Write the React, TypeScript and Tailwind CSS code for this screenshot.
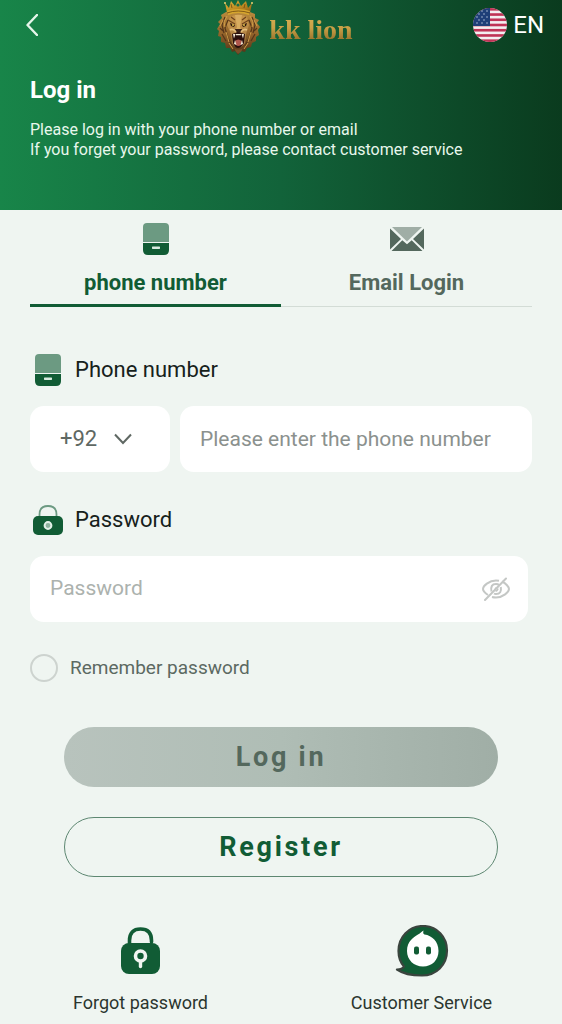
import { useState } from 'react';
import type { ReactNode } from 'react';
import clsx from 'clsx';

type LoginMode = 'phone' | 'email';

const COUNTRY_CODES = ['+92', '+91', '+880', '+1'];

const STRIPES = [0, 2, 4, 6, 8, 10, 12];

const STARS = [
  [4, 3], [9, 3], [14, 3],
  [6, 6], [11, 6],
  [4, 9], [9, 9], [14, 9],
  [6, 12], [11, 12],
  [4, 15], [9, 15], [14, 15],
];

function LionLogo() {
  return (
    <svg viewBox="0 0 44 56" className="h-14 w-11" aria-hidden="true">
      <defs>
        <linearGradient id="mane" x1="0" y1="0" x2="0" y2="1">
          <stop offset="0" stopColor="#b98a3c" />
          <stop offset="0.5" stopColor="#94642a" />
          <stop offset="1" stopColor="#4a2f16" />
        </linearGradient>
        <linearGradient id="crown" x1="0" y1="0" x2="1" y2="1">
          <stop offset="0" stopColor="#e5b93f" />
          <stop offset="0.5" stopColor="#c08d22" />
          <stop offset="1" stopColor="#8a5c14" />
        </linearGradient>
        <linearGradient id="face" x1="0" y1="0" x2="0" y2="1">
          <stop offset="0" stopColor="#c99648" />
          <stop offset="1" stopColor="#a57a46" />
        </linearGradient>
      </defs>
      <path
        d="M9 12 4 15 5 18 1 22 3 24 0 29 2 31 1 36 4 37 4 42 8 43 9 48 13 48 15 52 18 51 21 55 24 51 28 52 30 48 34 47 35 43 39 41 39 37 42 35 41 30 43 27 40 23 42 20 38 18 38 14 33 12Z"
        fill="url(#mane)"
      />
      <path
        d="M8 17 5 25 7 33M5 34 9 41M11 20 8 28 11 38 15 46M35 17 38 25 36 33M38 34 34 41M32 20 35 28 32 38 28 46M3 28 6 31M40 28 37 31M17 48 21 53 26 48"
        fill="none"
        stroke="#55351a"
        strokeWidth="1.2"
      />
      <path
        d="M6 20 3 26M10 16 7 22 8 27M9 32 12 42M37 20 40 26M33 16 36 22 35 27M34 32 31 42M12 43 16 49M31 43 27 49"
        fill="none"
        stroke="#cf9c48"
        strokeWidth="1"
      />
      <path d="M13 17Q21 12 30 17L32 25 29 34 28 43Q21 52 15 43L14 34 10 25Z" fill="url(#face)" />
      <path d="M18 15 20 27 18 31H25L23 27 25 15Z" fill="#d9ac60" />
      <path d="M11 20 18 24M32 20 25 24M14 17 18 20M29 17 25 20" stroke="#6e431d" strokeWidth="1.2" />
      <path d="M13 23 18 25 17 27 14 26ZM30 23 25 25 26 27 29 26Z" fill="#2c190c" />
      <circle cx="16" cy="25" r="0.9" fill="#f5cf54" />
      <circle cx="27" cy="25" r="0.9" fill="#f5cf54" />
      <path d="M18 29H25L24 32 21 34 19 32Z" fill="#3a2117" />
      <path d="M13 30Q16 28 19 32M30 30Q27 28 24 32" fill="none" stroke="#e3bd7c" strokeWidth="1.6" />
      <path d="M15 34Q21 31 28 34L27 43Q24 48 21 48 18 48 16 43Z" fill="#2a0f0c" />
      <path d="M18 41Q21 38 25 41L24 45Q21 47 19 45Z" fill="#b0564c" />
      <path
        d="M16 34 17 38.500 18.500 34ZM24.500 34 26 38.500 27 34ZM19 34H24V35.200H19ZM17 44 18 40 19.500 45ZM23.500 45 25 40 26 44Z"
        fill="#f4ead6"
      />
      <path d="M17 48Q21 51 26 48L24 52 21 54 19 52Z" fill="#79502a" />
      <path d="M8 3 12 8 14 1 18 6 21 0 24 6 29 1 31 8 35 3 33 13Q21 9 10 13Z" fill="url(#crown)" />
      <path d="M10 11Q21 7 33 11L32 15Q21 11 11 15Z" fill="#d6a52e" />
      <path d="M10 13Q21 9 33 13M14 4 15 8M28 4 27 8" fill="none" stroke="#6d4710" strokeWidth="0.8" />
      <circle cx="21" cy="5" r="1.6" fill="#1d6b46" />
      <circle cx="8" cy="3" r="1" fill="#f0d070" />
      <circle cx="35" cy="3" r="1" fill="#f0d070" />
    </svg>
  );
}

function FlagIcon() {
  return (
    <svg viewBox="0 0 34 34" className="size-[34px]" aria-hidden="true">
      <clipPath id="flag-clip">
        <circle cx="17" cy="17" r="17" />
      </clipPath>
      <g clipPath="url(#flag-clip)">
        <rect width="34" height="34" fill="#f3eef0" />
        {STRIPES.map((n) => (
          <rect key={n} y={(n * 34) / 13} width="34" height={34 / 13} fill="#bf3355" />
        ))}
        <rect width="17" height="18" fill="#1f3f78" />
        {STARS.map(([x, y]) => (
          <circle key={`${x}-${y}`} cx={x} cy={y} r="0.7" fill="#c9d5e8" />
        ))}
      </g>
    </svg>
  );
}

function PhoneIcon() {
  return (
    <svg viewBox="0 0 26 32" className="h-8 w-[26px]" aria-hidden="true">
      <path d="M4 0H22Q26 0 26 4V19H0V4Q0 0 4 0Z" fill="#6c9a82" />
      <path d="M0 20H26V27Q26 32 21 32H5Q0 32 0 27Z" fill="#115c35" />
      <rect x="9" y="23.5" width="8" height="2.4" rx="0.6" fill="#d9ebe0" />
    </svg>
  );
}

function MailIcon() {
  return (
    <svg viewBox="0 0 34 24" className="h-6 w-[34px]" aria-hidden="true">
      <path d="M2 0H32L17 14.5Z" fill="#a0aea6" />
      <path d="M0 1.5 11 12 0 22.5ZM34 1.5 23 12 34 22.5Z" fill="#54685d" />
      <path d="M12.3 13.2 17 17.3 21.7 13.2 32.5 24H1.5Z" fill="#54685d" />
    </svg>
  );
}

function LockIcon() {
  return (
    <svg viewBox="0 0 30 30" className="size-[30px]" aria-hidden="true">
      <path d="M6.5 13V9.5Q6.5 1 15 1T23.5 9.5V13" fill="none" stroke="#6c9a82" strokeWidth="1.8" />
      <rect y="11" width="30" height="19" rx="5" fill="#115c35" />
      <circle cx="15" cy="20.5" r="3.4" fill="#8db29e" stroke="#e3f0e8" strokeWidth="2" />
    </svg>
  );
}

function EyeOffIcon() {
  return (
    <svg viewBox="0 0 28 24" className="h-6 w-7" fill="none" stroke="#c4c7c5" strokeWidth="2" aria-hidden="true">
      <path d="M20 4.5C24 6.5 27 10 27 12 27 15 21 20.5 14 20.5Q12 20.5 10 20" />
      <path d="M6 18C3 16 1 13.5 1 12 1 9 7 3.5 14 3.5Q15.5 3.5 17 3.8" />
      <path d="M9.5 14.5Q8 7 14 7 16 7 17 8M18.8 10Q20 17 14 17 12.8 17 12 16.5" />
      <path d="M14 10.5 12.5 13.5M16 11.5Q15.5 14 13.5 14" strokeWidth="1.5" />
      <path d="M24 1.5 3 23" strokeLinecap="round" />
    </svg>
  );
}

function ForgotIcon() {
  return (
    <svg viewBox="0 0 40 48" className="h-12 w-10" aria-hidden="true">
      <path d="M8.5 18V13.5Q8.5 2 19.5 2T30.5 13.5V15" fill="none" stroke="#115c35" strokeWidth="3.6" strokeLinecap="round" />
      <rect y="16" width="39" height="31" rx="8" fill="#115c35" />
      <circle cx="19.5" cy="29" r="5" fill="none" stroke="#f0f5f1" strokeWidth="3.6" />
      <path d="M19.5 35V39.5" stroke="#f0f5f1" strokeWidth="3.4" strokeLinecap="round" />
    </svg>
  );
}

function ServiceIcon() {
  return (
    <svg viewBox="0 0 54 52" className="h-13 w-[54px]" aria-hidden="true">
      <path
        d="M28 1C42 1 52 12 52 25.5 52 40 41 50.5 27 50.5 17 50.5 7 48 2 44.5 5 44.5 8 43.5 9 41.5 5 37 3.5 32 3.5 26 3.5 12 14 1 28 1Z"
        fill="#115c35"
        stroke="#3a443e"
        strokeWidth="2.2"
        strokeLinejoin="round"
      />
      <path
        d="M12 26C12 16 19 12 23 9.5 25.5 8 27 6.5 28.5 5.5 28 7.5 28 9 29.5 9.5 37 10.5 43.5 16.5 43.5 26 43.5 35 37 41.5 28 41.5S12 35 12 26Z"
        fill="#fff"
      />
      <rect x="19" y="21.5" width="5" height="8" rx="2" fill="#115c35" />
      <rect x="31" y="21.5" width="5" height="8" rx="2" fill="#115c35" />
    </svg>
  );
}

interface TabProps {
  active: boolean;
  icon: ReactNode;
  label: string;
  onSelect: () => void;
}

function Tab({ active, icon, label, onSelect }: TabProps) {
  return (
    <button
      type="button"
      role="tab"
      aria-selected={active}
      onClick={onSelect}
      className={clsx(
        '-mb-px flex flex-1 flex-col items-center border-b-[3px] pb-[5px] text-[22px] leading-8 font-bold',
        active ? 'border-[#115c35] text-[#115c35]' : 'border-transparent text-[#54685d]',
      )}
    >
      <span className="mb-3 flex h-8 items-center">{icon}</span>
      {label}
    </button>
  );
}

export default function App() {
  const [mode, setMode] = useState<LoginMode>('phone');
  const [showPassword, setShowPassword] = useState(false);

  return (
    <div className="min-h-screen bg-[#eff5f1] font-[Roboto,sans-serif]">
      <header className="bg-linear-to-r from-[#188549] via-[#12633a] to-[#0a3b1e] pb-[50px] text-white">
        <div className="grid h-14 grid-cols-[1fr_auto_1fr] items-center pr-[18px] pl-[26px]">
          <button type="button" aria-label="Back" className="justify-self-start pb-1.5">
            <svg viewBox="0 0 12 22" className="h-[22px] w-3" fill="none" stroke="#e6f5ea" strokeWidth="2.4" aria-hidden="true">
              <path d="M11 1 1.5 11 11 21" strokeLinecap="round" strokeLinejoin="round" />
            </svg>
          </button>
          <div className="flex items-center gap-2">
            <LionLogo />
            <span className="bg-linear-to-b from-[#e0b95a] via-[#c9a046] to-[#7d5a1e] bg-clip-text pt-1 font-['Liberation_Serif',serif] text-[28px] leading-9 font-bold text-transparent">
              kk lion
            </span>
          </div>
          <button type="button" className="flex items-center gap-1.5 justify-self-end pb-1.5 text-2xl">
            <FlagIcon />
            EN
          </button>
        </div>
        <div className="px-[30px] pt-[18px]">
          <h1 className="text-2xl leading-8 font-bold">Log in</h1>
          <p className="pt-3.5 text-base leading-5 text-[#e8f7ec]">
            Please log in with your phone number or email
            <br />
            If you forget your password, please contact customer service
          </p>
        </div>
      </header>

      <main>
        <div role="tablist" className="mx-[30px] flex border-b border-[#d3dcd6] pt-[13px]">
          <Tab active={mode === 'phone'} icon={<PhoneIcon />} label="phone number" onSelect={() => setMode('phone')} />
          <Tab active={mode === 'email'} icon={<MailIcon />} label="Email Login" onSelect={() => setMode('email')} />
        </div>

        <form className="pt-[45px]" onSubmit={(e) => e.preventDefault()}>
          <div className="px-[30px]">
            <label htmlFor="phone" className="flex items-center gap-3.5 pl-[5px] text-[22px] leading-9 text-[#16211b]">
              <PhoneIcon />
              Phone number
            </label>
            <div className="mt-[18px] flex gap-2.5">
              <div className="relative w-[140px] shrink-0">
                <select
                  aria-label="Country code"
                  className="h-[66px] w-full appearance-none rounded-[14px] bg-white pb-0.5 pl-[30px] text-[22px] text-[#5f6863]"
                >
                  {COUNTRY_CODES.map((code) => (
                    <option key={code}>{code}</option>
                  ))}
                </select>
                <svg
                  viewBox="0 0 18 12"
                  className="pointer-events-none absolute top-[27px] right-[38px] h-3 w-[18px]"
                  fill="none"
                  stroke="#5f6863"
                  strokeWidth="2"
                  aria-hidden="true"
                >
                  <path d="M1 1.5 9 10 17 1.5" />
                </svg>
              </div>
              <input
                id="phone"
                type="tel"
                placeholder="Please enter the phone number"
                className="h-[66px] min-w-0 flex-1 rounded-[14px] bg-white px-5 text-[21px] outline-none placeholder:text-[#8b918e]"
              />
            </div>

            <label htmlFor="password" className="mt-[30px] flex items-center gap-3 pl-[3px] text-[22px] leading-9 text-[#16211b]">
              <LockIcon />
              Password
            </label>
            <div className="mt-[18px] mr-1 flex h-[66px] items-center rounded-[14px] bg-white pr-[18px] pl-5">
              <input
                id="password"
                type={showPassword ? 'text' : 'password'}
                placeholder="Password"
                className="min-w-0 flex-1 text-[21px] outline-none placeholder:text-[#acb2ae]"
              />
              <button type="button" aria-label="Show password" onClick={() => setShowPassword(!showPassword)}>
                <EyeOffIcon />
              </button>
            </div>

            <label className="mt-8 flex items-center gap-3 text-[19px] leading-7 text-[#5c6962]">
              <input
                type="checkbox"
                className="size-7 appearance-none rounded-full border-2 border-[#cdd3cf] checked:border-[#115c35] checked:bg-[#115c35]"
              />
              Remember password
            </label>
          </div>

          <div className="flex flex-col gap-[30px] px-16 pt-[45px]">
            <button
              type="submit"
              className="h-[60px] rounded-full bg-linear-to-r from-[#b8c3bd] via-[#afbdb5] to-[#a0aea6] text-[27px] font-bold tracking-widest text-[#54685d]"
            >
              Log in
            </button>
            <button
              type="button"
              className="h-[60px] rounded-full border border-[#5d8771] text-[27px] font-bold tracking-widest text-[#115c35]"
            >
              Register
            </button>
          </div>
        </form>

        <nav className="grid grid-cols-2 pt-12 pb-2 text-lg leading-7 text-[#2b352f]">
          <a href="#forgot" className="flex flex-col items-center gap-3">
            <span className="flex h-[52px] items-center">
              <ForgotIcon />
            </span>
            Forgot password
          </a>
          <a href="#service" className="flex flex-col items-center gap-3">
            <ServiceIcon />
            Customer Service
          </a>
        </nav>
      </main>
    </div>
  );
}
